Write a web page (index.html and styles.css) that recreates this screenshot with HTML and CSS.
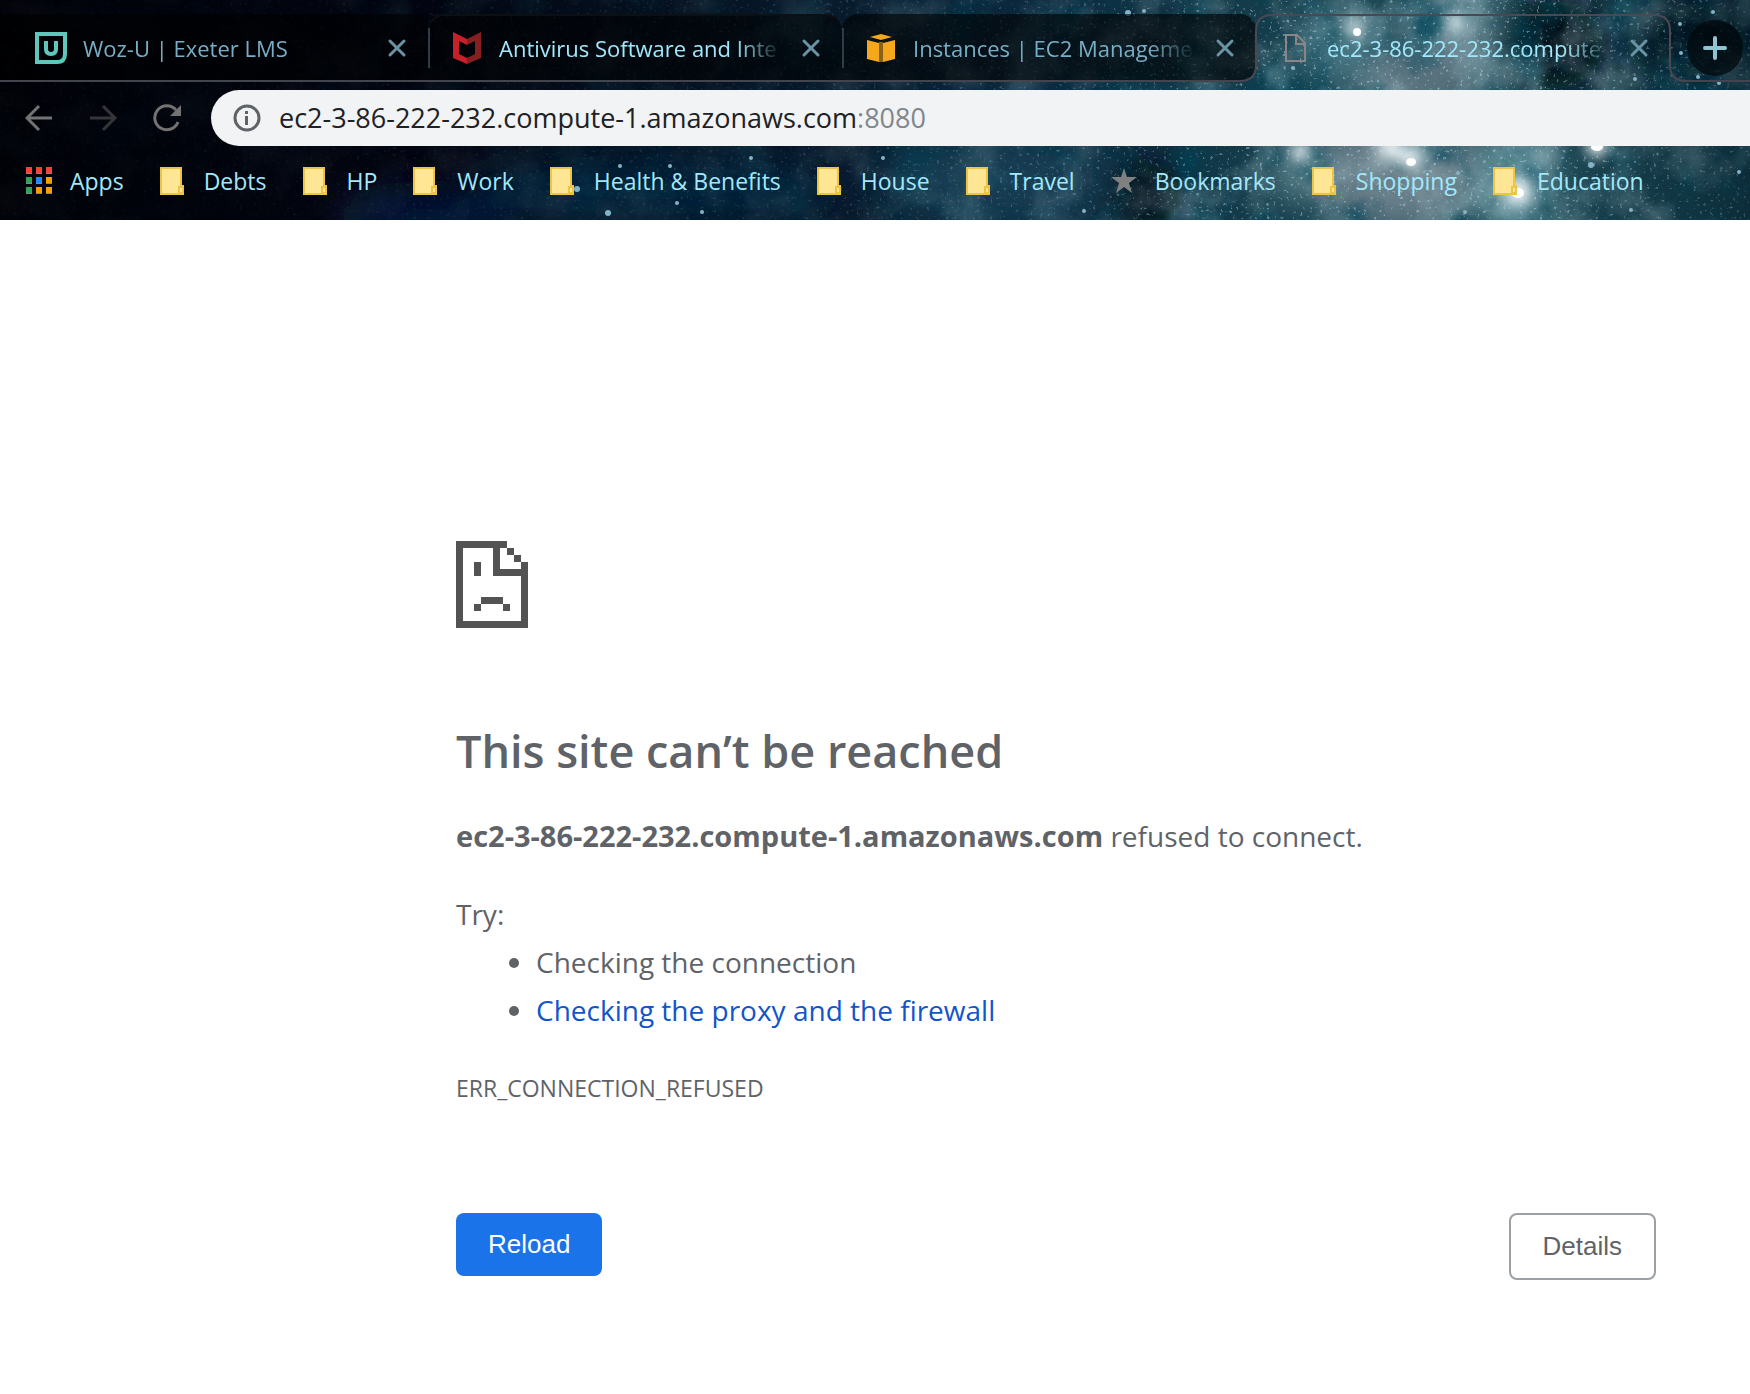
FILE: index.html
```html
<!DOCTYPE html>
<html lang="en">
<head>
<meta charset="utf-8">
<title>ec2-3-86-222-232.compute-1.amazonaws.com</title>
<link rel="stylesheet" href="styles.css">
</head>
<body>
<svg class="defs" aria-hidden="true">
  <symbol id="folder" viewBox="0 0 26 28"><path fill="#ffe694" stroke="#ecc446" stroke-width="2" d="M1 1h20v18h2v8H1z"/><path fill="#ffe694" stroke="#ecc446" stroke-width="2" d="M19 20h4v6h-4z"/></symbol>
  <symbol id="close" viewBox="0 0 24 24"><path d="M5 5l14 14M19 5L5 19" fill="none" stroke="#6a93a3" stroke-width="3" stroke-linecap="round"/></symbol>
</svg>

<header class="browser">
  <svg class="sky" aria-hidden="true" viewBox="0 0 1750 220" preserveAspectRatio="xMinYMin slice">
    <defs>
      <linearGradient id="base">
        <stop offset="0" stop-color="#010208"/><stop offset=".25" stop-color="#020511"/>
        <stop offset=".45" stop-color="#061728"/><stop offset=".6" stop-color="#0c2a3f"/>
        <stop offset=".72" stop-color="#143c4a"/><stop offset=".86" stop-color="#1d4a57"/>
        <stop offset="1" stop-color="#0d2c39"/>
      </linearGradient>
      <linearGradient id="fade">
        <stop offset=".1" stop-color="#fff" stop-opacity=".08"/><stop offset=".45" stop-color="#fff" stop-opacity=".3"/>
        <stop offset=".62" stop-color="#fff" stop-opacity=".6"/><stop offset=".72" stop-color="#fff"/>
        <stop offset=".88" stop-color="#fff"/><stop offset="1" stop-color="#fff" stop-opacity=".5"/>
      </linearGradient>
      <mask id="right"><rect width="1750" height="220" fill="url(#fade)"/></mask>
      <filter id="soft" x="-50%" y="-50%" width="200%" height="200%"><feGaussianBlur stdDeviation="18"/></filter>
      <filter id="glow" x="-100%" y="-100%" width="300%" height="300%"><feGaussianBlur stdDeviation="7"/></filter>
      <filter id="cloud" x="0" y="0" width="100%" height="100%"><feTurbulence type="fractalNoise" baseFrequency=".022" numOctaves="7" seed="8"/><feColorMatrix values="0 0 0 0 .46  0 0 0 0 .64  0 0 0 0 .69  2.6 0 0 0 -1.1"/></filter>
      <filter id="dark" x="0" y="0" width="100%" height="100%"><feTurbulence type="fractalNoise" baseFrequency=".018" numOctaves="7" seed="21"/><feColorMatrix values="0 0 0 0 0  0 0 0 0 .06  0 0 0 0 .1  0 3 0 0 -1.4"/></filter>
      <filter id="dust" x="0" y="0" width="100%" height="100%"><feTurbulence type="fractalNoise" baseFrequency=".3" numOctaves="2" seed="4"/><feColorMatrix values="0 0 0 0 .5  0 0 0 0 .75  0 0 0 0 .85  0 0 8 0 -5.2"/></filter>
    </defs>
    <rect width="1750" height="220" fill="url(#base)"/>
    <g filter="url(#soft)">
      <ellipse cx="430" cy="215" rx="90" ry="22" fill="#04143a"/>
      <ellipse cx="650" cy="190" rx="180" ry="30" fill="#06203a"/>
      <ellipse cx="1000" cy="180" rx="120" ry="40" fill="#143c52"/>
      <ellipse cx="1345" cy="50" rx="50" ry="34" fill="#487885"/>
      <ellipse cx="1452" cy="20" rx="32" ry="40" fill="#8aa6ae"/>
      <ellipse cx="1420" cy="80" rx="60" ry="40" fill="#566f7b"/>
      <ellipse cx="1400" cy="170" rx="80" ry="60" fill="#6a808b"/>
      <ellipse cx="1515" cy="180" rx="40" ry="50" fill="#5f8f99"/>
      <ellipse cx="1300" cy="170" rx="30" ry="30" fill="#5e8690"/>
      <ellipse cx="1145" cy="195" rx="40" ry="34" fill="#010c12"/>
      <ellipse cx="1555" cy="45" rx="50" ry="45" fill="#010a12"/>
      <ellipse cx="1700" cy="40" rx="60" ry="50" fill="#041520"/>
    </g>
    <g mask="url(#right)">
      <rect width="1750" height="220" filter="url(#dark)" opacity=".75"/>
      <rect width="1750" height="220" filter="url(#cloud)" opacity=".35"/>
      <rect width="1750" height="220" filter="url(#dust)" opacity=".45"/>
    </g>
    <g fill="#e6eff2" filter="url(#glow)">
      <circle cx="1355" cy="28" r="8"/><circle cx="1410" cy="158" r="11"/><circle cx="1390" cy="148" r="13"/>
      <circle cx="1518" cy="192" r="15"/><circle cx="1597" cy="146" r="11"/><circle cx="1300" cy="152" r="10"/>
      <circle cx="1455" cy="22" r="10"/><circle cx="1543" cy="160" r="5"/>
    </g>
    <g fill="#fff">
      <circle cx="1357" cy="32" r="4"/><ellipse cx="1411" cy="162" rx="5" ry="4"/><ellipse cx="1518" cy="193" rx="6" ry="5"/><ellipse cx="1597" cy="147" rx="6" ry="4"/>
    </g>
    <g fill="#83b3c6">
      <circle cx="608" cy="213" r="3"/><circle cx="620" cy="166" r="2"/><circle cx="670" cy="166" r="2"/><circle cx="577" cy="189" r="3"/>
      <circle cx="677" cy="203" r="2"/><circle cx="702" cy="212" r="2"/><circle cx="751" cy="158" r="2"/><circle cx="1128" cy="13" r="3"/>
      <circle cx="1144" cy="11" r="2"/><circle cx="1084" cy="211" r="2"/><circle cx="883" cy="158" r="2"/><circle cx="1293" cy="68" r="2"/>
      <circle cx="1635" cy="79" r="2"/><circle cx="1713" cy="12" r="2"/><circle cx="1680" cy="24" r="2"/><circle cx="1719" cy="83" r="2"/>
      <circle cx="1698" cy="77" r="2"/><circle cx="1591" cy="165" r="3"/><circle cx="1739" cy="172" r="2"/><circle cx="1458" cy="173" r="2"/>
      <circle cx="1631" cy="210" r="2"/><circle cx="1681" cy="53" r="2"/><circle cx="1465" cy="212" r="2"/>
    </g>
  </svg>

  <nav class="tabs" aria-label="Tabs">
    <div class="tab first">
      <svg class="favicon" viewBox="0 0 32 32"><path fill="none" stroke="#5fc6bb" stroke-width="4" d="M2 2h28v20q0 8-8 8H2z"/><path fill="none" stroke="#5fc6bb" stroke-width="4" d="M11 9v8q0 5 5 5t5-5V9"/></svg>
      <a class="title dim" href="#">Woz-U | Exeter LMS</a>
      <button class="close" aria-label="Close tab"><svg viewBox="0 0 24 24"><use href="#close"/></svg></button>
    </div>
    <div class="tab outlined">
      <svg class="favicon" viewBox="0 0 32 32"><path fill="#c8202a" d="M2 0l14 7v6l-8-4v13l8 4v6L2 26z"/><path fill="#84201f" d="M30 0L16 7v6l8-4v13l-8 4v6l14-6z"/></svg>
      <a class="title" href="#">Antivirus Software and Inte</a>
      <button class="close" aria-label="Close tab"><svg viewBox="0 0 24 24"><use href="#close"/></svg></button>
    </div>
    <div class="tab last">
      <svg class="favicon" viewBox="0 0 32 32"><path fill="#f5a81c" d="M2 8l12 3v19L2 27zM30 8l-12 3v19l12-3zM16 2l11 3-11 3L5 5z"/><path fill="#87621b" d="M14 10h4v20h-4z"/></svg>
      <a class="title dim" href="#">Instances | EC2 Manageme</a>
      <button class="close" aria-label="Close tab"><svg viewBox="0 0 24 24"><use href="#close"/></svg></button>
    </div>
    <div class="tab active">
      <svg class="outline" viewBox="0 0 446 68" aria-hidden="true"><path d="M0 67q16 0 16-16V17Q16 1 32 1h382q16 0 16 16v34q0 16 16 16" fill="none" stroke="#4b4853" stroke-width="2"/></svg>
      <svg class="favicon" viewBox="0 0 32 32"><path fill="none" stroke="#8b8587" stroke-width="2" d="M7 3h11l8 8v18H7zM17 3v9h9"/></svg>
      <a class="title" href="#" aria-current="page">ec2-3-86-222-232.compute</a>
      <button class="close" aria-label="Close tab"><svg viewBox="0 0 24 24"><use href="#close"/></svg></button>
    </div>
    <div class="rest">
      <button class="new-tab" aria-label="New tab"><svg viewBox="0 0 24 24"><path d="M12 2v20M2 12h20" fill="none" stroke="#8fc4d3" stroke-width="4" stroke-linecap="round"/></svg></button>
    </div>
  </nav>

  <div class="toolbar">
    <button class="tool" aria-label="Back"><svg viewBox="0 0 28 28"><path d="M27 14H3M14 2L2 14l12 12" fill="none" stroke="#737373" stroke-width="3"/></svg></button>
    <button class="tool" aria-label="Forward"><svg viewBox="0 0 28 28"><path d="M1 14h24M14 2l12 12-12 12" fill="none" stroke="#363639" stroke-width="3"/></svg></button>
    <button class="tool" aria-label="Reload page"><svg viewBox="0 0 28 28"><path d="M25 18A12 12 0 1 1 23 6" fill="none" stroke="#737373" stroke-width="3"/><path fill="#737373" d="M28 1v11H17z"/></svg></button>
    <div class="address">
      <svg class="info" viewBox="0 0 28 28"><circle cx="14" cy="14" r="12" fill="none" stroke="#5f6368" stroke-width="3"/><path fill="#5f6368" d="M12 12h3v9h-3zM12 7h3v3h-3z"/></svg>
      <div class="url" role="textbox" aria-label="Address" contenteditable="true" spellcheck="false">ec2-3-86-222-232.compute-1.amazonaws.com<span class="port">:8080</span></div>
    </div>
  </div>

  <nav class="bookmarks" aria-label="Bookmarks">
    <a href="#"><svg viewBox="0 0 26 28"><path fill="#888" d="M0 1h6v6H0zM10 1h6v6h-6zM20 1h6v6h-6zM0 11h6v6H0zM10 11h6v6h-6zM20 11h6v6h-6zM0 21h6v6H0zM10 21h6v6h-6zM20 21h6v6h-6z"/><path fill="#f44336" d="M0 0h6v6H0zM10 0h6v6h-6zM20 0h6v6h-6z"/><path fill="#34a05a" d="M0 10h6v6H0zM0 20h6v6H0z"/><path fill="#1e88f5" d="M10 10h6v6h-6z"/><path fill="#f5a000" d="M20 10h6v6h-6zM10 20h6v6h-6zM20 20h6v6h-6z"/></svg>Apps</a>
    <a href="#"><svg viewBox="0 0 26 28"><use href="#folder"/></svg>Debts</a>
    <a href="#"><svg viewBox="0 0 26 28"><use href="#folder"/></svg>HP</a>
    <a href="#"><svg viewBox="0 0 26 28"><use href="#folder"/></svg>Work</a>
    <a href="#"><svg viewBox="0 0 26 28"><use href="#folder"/></svg>Health &amp; Benefits</a>
    <a href="#"><svg viewBox="0 0 26 28"><use href="#folder"/></svg>House</a>
    <a href="#"><svg viewBox="0 0 26 28"><use href="#folder"/></svg>Travel</a>
    <a href="#"><svg viewBox="0 0 26 28"><path fill="#808080" d="M13 1l3 9h10l-8 6 3 10-8-6-8 6 3-10-8-6h10z"/></svg>Bookmarks</a>
    <a href="#"><svg viewBox="0 0 26 28"><use href="#folder"/></svg>Shopping</a>
    <a href="#"><svg viewBox="0 0 26 28"><use href="#folder"/></svg>Education</a>
  </nav>
</header>

<main class="error">
  <svg class="sad" viewBox="0 0 72 87" shape-rendering="crispEdges" aria-hidden="true"><path fill="#535353" d="M0 0h51v7H44v21h21v-7h7v66H0zM7 7v73h58V35H37V7zM51 7h7v7h-7zM58 14h7v7h-7zM18 21h7v14h-7zM25 56h22v7H25zM18 63h7v7h-7zM47 63h7v7h-7z" fill-rule="evenodd"/></svg>
  <h1>This site can’t be reached</h1>
  <p><strong>ec2-3-86-222-232.compute-1.amazonaws.com</strong> refused to connect.</p>
  <div class="suggestions">
    <p>Try:</p>
    <ul>
      <li>Checking the connection</li>
      <li><a href="#">Checking the proxy and the firewall</a></li>
    </ul>
  </div>
  <p class="code">ERR_CONNECTION_REFUSED</p>
  <div class="actions">
    <button class="reload">Reload</button>
    <button class="details">Details</button>
  </div>
</main>
</body>
</html>
```
FILE: styles.css
```css
* { box-sizing: border-box; }

body {
  margin: 0;
  background: #fff;
  color: #5f6368;
  font-family: "Open Sans", "Noto Sans", sans-serif;
  font-size: 28px;
  line-height: 48px;
}

a { color: inherit; text-decoration: none; }
button { padding: 0; border: 0; background: none; font: inherit; }
svg { display: block; flex: none; }
.defs { display: none; }

/* Browser chrome */
.browser {
  position: relative;
  isolation: isolate;
  overflow: hidden;
  background: #020511;
  color: #a2e8fb;
}
.sky { position: absolute; inset: 0; z-index: -1; width: 100%; height: 100%; }

.tabs { display: flex; padding-top: 14px; }
.tab {
  position: relative;
  display: flex;
  align-items: center;
  gap: 16px;
  width: 414px;
  height: 68px;
  padding: 0 19px 1px 23px;
  flex: none;
  background: rgba(0, 0, 0, .6);
}
.tab.first { width: 428px; padding-left: 35px; }
.tab.outlined { border-radius: 16px 16px 0 0; box-shadow: inset 0 2px #0d1013; }
.tab.last { border-radius: 16px 16px 16px 0; }
.tab.active { background: none; }
.tab:not(.active)::after, .rest::after {
  content: "";
  position: absolute;
  inset: auto 0 0 0;
  height: 2px;
  background: #43454e;
}
.tab.last::after { right: 16px; }
.tab.outlined::before, .tab.last::before {
  content: "";
  position: absolute;
  left: 0;
  top: 14px;
  width: 2px;
  height: 40px;
  background: #2b3d47;
}
.outline { position: absolute; left: -16px; top: 0; width: 446px; height: 68px; }
.favicon { width: 32px; height: 32px; }
.title {
  flex: 1;
  overflow: hidden;
  white-space: nowrap;
  font-size: 22px;
  line-height: 32px;
  mask-image: linear-gradient(to right, #000 calc(100% - 48px), transparent);
}
.title.dim { color: #78aec5; }
.close { width: 24px; height: 24px; }
.close svg { width: 24px; height: 24px; }
.rest { position: relative; flex: 1; padding: 6px 0 0 17px; }
.rest::after { left: 16px; }
.new-tab {
  display: grid;
  place-items: center;
  width: 56px;
  height: 56px;
  border-radius: 50%;
  background: rgba(0, 5, 10, .7);
}
.new-tab svg { width: 24px; height: 24px; }

.toolbar { display: flex; align-items: center; gap: 36px; padding: 8px 0 0 25px; }
.tool svg { width: 28px; height: 28px; }
.tool { width: 28px; height: 28px; }
.address {
  display: flex;
  align-items: center;
  gap: 18px;
  flex: 1;
  height: 56px;
  margin-left: -6px;
  padding-left: 22px;
  border-radius: 28px 0 0 28px;
  background: #f1f3f4;
}
.info { width: 28px; height: 28px; }
.url { flex: 1; color: #202124; font-size: 27px; line-height: 56px; white-space: nowrap; }
.port { color: #80868b; }

.bookmarks {
  display: flex;
  gap: 36px;
  padding: 15px 0 19px 26px;
  font-size: 23px;
  line-height: 40px;
  white-space: nowrap;
}
.bookmarks a { display: flex; align-items: center; gap: 18px; }
.bookmarks svg { width: 26px; height: 28px; }

/* Error page */
.error { padding: 321px 94px 113px 456px; }
.sad { width: 72px; height: 87px; }
h1 { margin: 91px 0 29px; font-size: 45px; font-weight: 600; line-height: 64px; }
p { margin: 0; }
strong { font-size: 29px; }
.suggestions { margin: 30px 0; }
ul { margin: 0; padding-left: 80px; }
li a { color: #1155cc; }
.code { font-size: 23px; }
.actions { display: flex; justify-content: space-between; align-items: flex-start; margin-top: 101px; }
.actions button {
  padding: 0 32px;
  border-radius: 8px;
  font-family: "Liberation Sans", Arial, sans-serif;
  font-size: 26px;
  line-height: 63px;
}
.reload { background: #1a73e8; color: #fff; }
.actions .details { border: 2px solid #9aa0a6; background: #fff; color: #5f6368; }
```
